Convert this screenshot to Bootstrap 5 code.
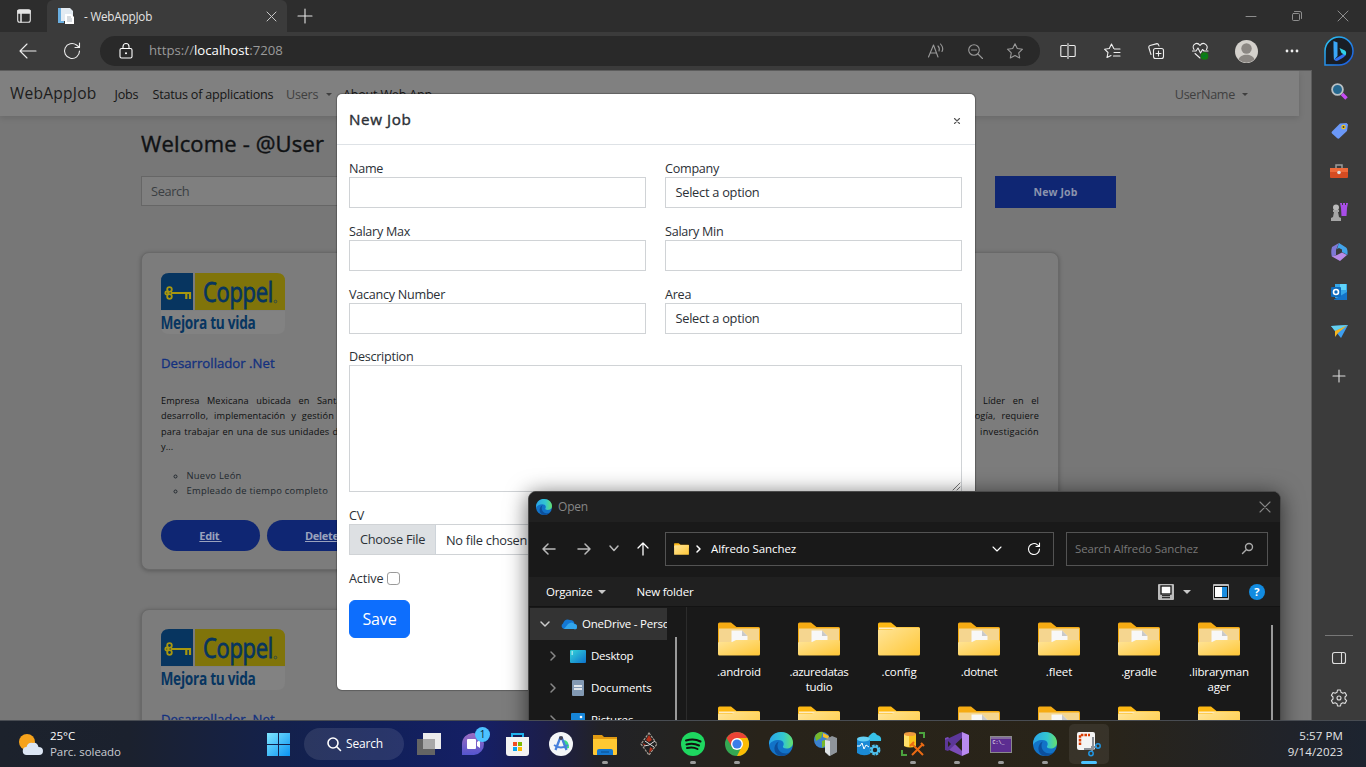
<!DOCTYPE html>
<html lang="en">
<head>
<meta charset="utf-8">
<title>WebAppJob</title>
<link href="https://cdn.jsdelivr.net/npm/bootstrap@5.3.0/dist/css/bootstrap.min.css" rel="stylesheet">
<style>
body{width:1366px;height:767px;overflow:hidden;margin:0;background:#3b3b3b;font-family:"Open Sans","Noto Sans",sans-serif;font-size:12.8px;letter-spacing:-.37px;line-height:1.2;white-space:nowrap}
svg{display:block;flex:none;overflow:visible}
.ln{fill:none;stroke:currentColor;stroke-width:1.1;stroke-linecap:round;stroke-linejoin:round}
/* browser frame */
.tabstrip{height:32px;background:#2d2d2d;color:#e4e4e4}
.tabact{width:47px;height:32px}
.tab-page{width:240px;height:32px;background:#3b3b3b;border-radius:6px 6px 0 0;font-size:11.7px;letter-spacing:-.2px;padding:0 11px 0 11px}
.tab-page .ln{color:#c8c8c8;stroke-width:1}
.winbtn{width:46px;color:#999}
.winbtn .ln{stroke-width:.9}
.toolbar{height:38px;color:#eee}
.omnibox{width:940px;height:30px;border-radius:15px;background:#292929;color:#9a9a9a;margin-left:12px;padding:0 17px 0 20px;font-size:13.2px;letter-spacing:0}
.tslot{width:44px}
.stage{height:650px;overflow:hidden}
.page{width:1312px;height:650px;background:#777;border-right:1px solid #5c5c5c;border-top:1px solid #5d5d5d;overflow:hidden}
.edgebar{width:54px;background:#3b3b3b;color:#ddd;padding-top:1px}
.edgebar .slot{height:40.2px}
/* site */
.topnav{width:1299px;height:45px;background:#808080;box-shadow:0 2px 6px rgba(0,0,0,.12);color:#161616;padding:2px 0 0 10px;font-size:12.6px;letter-spacing:-.22px}
.brandname{font-size:15.6px;width:104.500px;letter-spacing:.2px;color:#1c1c1c;margin-top:-2px}
.caret{width:0;height:0;border:3.5px solid transparent;border-top-color:currentColor;border-bottom:0;margin-left:8px}
.mute{color:#3f3f3f}
.body-col{width:918px;margin-left:141px}
.hello{font-size:22px;font-weight:400;line-height:26px;color:#101214;margin:14px 0 20px;letter-spacing:.15px;-webkit-text-stroke:.4px #101214}
.searchbox{width:700px;height:30px;border:1px solid #666;background:#7f7f7f;color:#3a3e42;padding:1px 9px 0}
.btn-newjob{width:121px;height:32px;background:#0f2673;color:#8b93ad;font-size:10.5px;font-weight:700;letter-spacing:.1px}
.jobcard{height:318px;width:918px;border:1px solid #696969;border-radius:8px;background:#7c7c7c;box-shadow:0 1px 4px rgba(0,0,0,.25);padding:20px 19px;margin-bottom:39px}
.jobtitle{color:#12307f;font-size:13.2px;font-weight:400;margin:20px 0 21px;line-height:18px;letter-spacing:0;-webkit-text-stroke:.3px #12307f}
.jobtext{font-size:9.2px;line-height:15.4px;color:#0d0f10;letter-spacing:.12px}
.jobtext .w1{word-spacing:5px}.jobtext .w2{word-spacing:3.4px}.jobtext .w3{word-spacing:.7px}
.jobmeta{font-size:9.4px;line-height:15.4px;color:#22292f;letter-spacing:.27px;list-style:circle;margin:13px 0 0;padding-left:25.5px}
.btn-pill{height:31px;border-radius:16px;background:#0f2673;color:#9aa2bd;font-weight:700;font-size:11px;text-decoration:underline;margin-right:7px}
/* form dialog */
.jobmodal{left:337px;top:24px;width:638px;height:596px;background:#fff;border-radius:5px;box-shadow:0 0 1px 1px rgba(0,0,0,.25);color:#2b3036}
.jm-head{height:51px;border-bottom:1px solid #dee2e6;padding:0 15px 0 12px}
.jm-title{font-size:15.2px;font-weight:400;letter-spacing:.6px;-webkit-text-stroke:.4px #2b3036}
.jm-body{padding:15px 13px 0 12px}
.fgrid{display:grid;grid-template-columns:297px 297px;column-gap:19px}
.lab{font-size:12.6px;line-height:17px;height:17px;letter-spacing:-.26px}
.inp{height:31px;border:1px solid #d0d3d6;border-radius:0;padding:1px 9.5px 0;background:#fff;display:flex;align-items:center;margin-bottom:14.8px;letter-spacing:-.27px}
.chooser{background:#dde0e3;height:29px;margin:-1px 0 0 -9.5px;width:86px;border-right:1px solid #ced4da}
.btn-save{width:61px;height:38px;font-size:16px;letter-spacing:-.1px;padding:0;border-radius:6px}
.chk{width:13px;height:13px;border-radius:3px;border-color:#999}
/* file dialog */
.filedlg{left:528px;top:421px;width:753px;height:300px;background:#191919;border:1px solid #4a4a4a;border-radius:8px;box-shadow:0 3px 22px rgba(0,0,0,.6);overflow:hidden;color:#fff;font-size:11.5px;letter-spacing:-.3px}
.fd-title{height:30px;background:#202020;color:#868686;padding:0 10px 0 7px;font-size:12px;letter-spacing:-.2px}
.fd-nav{height:55px;color:#b9b9b9;padding-bottom:2px}
.fd-box{height:34px;border:1px solid #535353}
.fd-tools{height:30px;background:#202020;border-bottom:1px solid #131313;padding:0 15px 0 17px;letter-spacing:-.2px}
.tree{width:137px;overflow:hidden;margin-left:1px}
.tree .trow{height:32px}
.fcell{width:80px;height:84px;text-align:center;line-height:15px;padding-top:15px}
.fcell svg{margin:0 auto 8px}
.flist{width:562px}
.bar-v{width:2px;background:#9a9a9a}
/* taskbar */
.taskbar{height:47px;border-top:1px solid #484c52;color:#fff;background:linear-gradient(90deg,#1c222c 0,#1b212e 130px,#14214a 270px,#112059 380px,#151f66 480px,#1c1e4a 545px,#222227 600px,#232323 650px,#28231a 760px,#292419 1100px,#20232a 1290px,#1d2430 100%)}
.pill{width:100px;height:32px;border-radius:16px;background:rgba(255,255,255,.1);font-size:12px;letter-spacing:-.2px;padding-top:1px}
.tk{width:44px;height:46px}
.run::after{content:"";position:absolute;bottom:3px;left:19px;width:6px;height:3px;border-radius:2px;background:#9b9b9b}
.active-app{background:rgba(255,255,255,.07);border-radius:5px;width:40px;height:40px;margin:3px 2px}
.active-app::after{bottom:0;left:12px;width:16px;background:#4cc2ff}
.notif{left:24px;top:6px;width:15px;height:15px;border-radius:50%;background:#4cc2ff;color:#123;font-size:10px;line-height:15px;text-align:center}
.clock{font-size:11.5px;line-height:16px;letter-spacing:-.05px}
</style>
</head>
<body class="d-flex flex-column">
<svg width="0" height="0" class="position-absolute">
<defs>
<linearGradient id="gF" x1="0" y1="0" x2="1" y2="1"><stop offset="0" stop-color="#ffe59a"/><stop offset="1" stop-color="#ffc736"/></linearGradient>
<linearGradient id="gE2" x1="0" y1="0" x2="1" y2="0"><stop offset="0" stop-color="#2aa5e8"/><stop offset=".6" stop-color="#33c7cf"/><stop offset="1" stop-color="#66e06a"/></linearGradient>
<linearGradient id="gW" x1="0" y1="0" x2="1" y2="1"><stop offset="0" stop-color="#7fe6ff"/><stop offset="1" stop-color="#0a93f2"/></linearGradient>
<linearGradient id="gB" x1="0" y1="0" x2="1" y2="1"><stop offset="0" stop-color="#2bc8f5"/><stop offset="1" stop-color="#1c55dd"/></linearGradient>
<linearGradient id="gP" x1="0" y1="0" x2="0" y2="1"><stop offset="0" stop-color="#9c6cc0"/><stop offset="1" stop-color="#5455cf"/></linearGradient>
<linearGradient id="gD" x1="0" y1="0" x2="1" y2="1"><stop offset="0" stop-color="#35d4da"/><stop offset="1" stop-color="#0d72cb"/></linearGradient>
</defs>
<symbol id="fold" viewBox="0 0 42 34"><path d="M0 2Q0 .5 1.500 .5H13L18.500 5H40.500Q42 5 42 6.500V14H0z" fill="#fdb813"/><path d="M1 5.500H12L18 5.500V7H1z" fill="#fff" opacity=".75"/><path d="M0 8.500Q0 7.500 1.500 7.500H14L18 5.500H40.500Q42 5.500 42 7V32Q42 33.500 40.500 33.500H1.500Q0 33.500 0 32z" fill="url(#gF)"/></symbol>
<symbol id="foldp" viewBox="0 0 42 34"><path d="M0 2Q0 .5 1.500 .5H13L18.500 5H40.500Q42 5 42 6.500V32H0z" fill="#f5ab13"/><path d="M1 6.500H41V22H1z" fill="#f5d690"/><path d="M13.500 8.500H24L29.500 14V24H13.500z" fill="#f8f8f8"/><path d="M24 8.500V14H29.500z" fill="#c9c9c9"/><path d="M0 21Q0 20 1.500 20H14L18 18H40.500Q42 18 42 19.500V32Q42 33.500 40.500 33.500H1.500Q0 33.500 0 32z" fill="url(#gF)"/></symbol>
<symbol id="edge" viewBox="0 0 24 24"><circle cx="12" cy="12" r="12" fill="#1273c8"/><path d="M.1 10.500C1 4 6 0 12 0 19 0 24 5 24 10.500 24 14.500 21 16.500 17.500 16.500 14.500 16.500 13.500 15.200 14 14.200 15.500 12.500 15 8 9.500 8 5 8 1.500 10 .1 13z" fill="url(#gE2)"/><path d="M8.500 13.500C8.500 18 12 21.500 17 21.500 19 21.500 21.500 20 22.500 18.500 20 22.500 16 24.200 12 24 7 23.500 5 19 5.500 15.500 6 12 8 10 10 9.500 9 10.500 8.500 12 8.500 13.500z" fill="#0c4f9c"/></symbol>
<symbol id="logobase" viewBox="0 0 124 61"><path d="M0 8Q0 0 8 0H32V37H0z" fill="#073560"/><path d="M34 0H116Q124 0 124 8V37H34z" fill="#80740a"/><path d="M0 37.500H124V53Q124 61 116 61H8Q0 61 0 53z" fill="#828282"/><g fill="none" stroke="#a8970f" stroke-width="1.800"><circle cx="8.500" cy="16.500" r="2.300"/><circle cx="8.500" cy="23.500" r="2.300"/><circle cx="5.800" cy="20" r="1.500"/><path d="M10 20H29V26M25.300 20V26" stroke-width="2.200"/></g><circle cx="114.500" cy="28.500" r="1.300" fill="none" stroke="#073560" stroke-width=".6"/></symbol>
</svg>

<header class="tabstrip d-flex align-items-center">
  <div class="tabact d-flex align-items-center justify-content-center"><svg width="14" height="14" class="ln"><rect x=".7" y=".7" width="12.600" height="12.600" rx="2"/><path d="M1 2.500H13V1.500H1zM4 4V13M1 4H13" stroke-width="1.500"/></svg></div>
  <div class="tab-page d-flex align-items-center"><svg width="16" height="16"><path d="M0 0H6V15H0z" fill="#69aee0"/><path d="M3 0H12L15 3V13H3z" fill="#e3ebf2"/><path d="M7 6H13L16 9V16H7z" fill="#fff"/><path d="M9 9h4M9 11h5M9 13h5" stroke="#aeb7c0"/></svg><span style="margin-left:10px">- WebAppJob</span><svg width="9" height="9" class="ln ms-auto"><path d="M0 0 9 9M9 0 0 9"/></svg></div>
  <svg width="14" height="14" class="ln" style="margin-left:11px"><path d="M7 0V14M0 7H14"/></svg>
  <div class="ms-auto d-flex">
    <div class="winbtn d-flex justify-content-center"><svg width="10" height="10" class="ln"><path d="M0 5.500H10"/></svg></div>
    <div class="winbtn d-flex justify-content-center"><svg width="10" height="10" class="ln"><rect x=".5" y="2.500" width="7" height="7" rx="1"/><path d="M2.500 .5H8Q9.500 .5 9.500 2V7.500"/></svg></div>
    <div class="winbtn d-flex justify-content-center"><svg width="10" height="10" class="ln"><path d="M0 0 10 10M10 0 0 10"/></svg></div>
  </div>
</header>

<div class="toolbar d-flex align-items-center">
  <div class="tslot d-flex justify-content-center" style="width:56px"><svg width="16" height="14" class="ln"><path d="M16 7H0M7 0 0 7 7 14"/></svg></div>
  <div class="tslot d-flex justify-content-center" style="width:32px"><svg width="16" height="16" class="ln"><path d="M15.500 8A7.500 7.500 0 1 1 12.500 2L15 4M15.500 0V4.500H11"/></svg></div>
  <div class="omnibox d-flex align-items-center"><svg width="14" height="16" class="ln text-white"><rect x="0" y="5.500" width="12" height="9.500" rx="1.500"/><path d="M3 5.500V3.500A3 3 0 0 1 9 3.500V5.500"/><circle cx="6" cy="10.300" r=".5"/></svg><span style="margin-left:15px">https://<span class="text-white">localhost</span>:7208</span>
    <div class="ms-auto d-flex align-items-center" style="gap:24px">
      <svg width="16" height="14" class="ln"><path d="M.5 13 5.500 1 10 13M2.300 9H8.500M10 2Q12 4 11 7M12.500 0Q16 4 14 7.500"/></svg>
      <svg width="15" height="15" class="ln"><circle cx="6" cy="6" r="5.300"/><path d="M3.500 6H8.500M10 10 14.500 14.500"/></svg>
      <svg width="16" height="16" class="ln"><path d="M8 .8 10.300 5.500 15.500 6.200 11.700 9.900 12.700 15 8 12.500 3.300 15 4.300 9.900 .5 6.200 5.700 5.500z"/></svg>
    </div></div>
  <div class="d-flex align-items-center" style="margin-left:6px">
    <div class="tslot d-flex justify-content-center"><svg width="16" height="16" class="ln"><path d="M6.500 2.500H1.800Q.8 2.500 .8 3.500V12.500Q.8 13.500 1.800 13.500H6.500M9.500 2.500H14.200Q15.200 2.500 15.200 3.500V12.500Q15.200 13.500 14.200 13.500H9.500M8 .5V15.500"/></svg></div>
    <div class="tslot d-flex justify-content-center"><svg width="16" height="16" class="ln"><path d="M9.800 5.500 7.500 1 5.300 5.500 .5 6.200 4 9.500 3 14.500 7 12.500M10.500 6H16M10 9.500H16M9.500 13H16"/></svg></div>
    <div class="tslot d-flex justify-content-center"><svg width="16" height="16" class="ln"><rect x="5.500" y="5.500" width="10" height="10" rx="2"/><path d="M10.500 8V13M8 10.500H13M3 11.500 .8 4.500Q.5 3 2 2.500L9 .6Q10.500 .5 11 3"/></svg></div>
    <div class="tslot d-flex justify-content-center"><svg width="17" height="16" class="ln"><path d="M2 6.500C-1 2 5-2 8 2.500 11-2 17 2 14.500 6.500M.5 8H4L6 5 8.500 10 10.500 6.500 12 8H16M3 10.500 8 15"/><circle cx="12.500" cy="13" r="3.300" fill="#107c10" stroke="#107c10"/><path d="m11 13 1 1 2-2" stroke="#073"/></svg></div>
    <div class="tslot d-flex justify-content-center" style="width:48px"><svg width="23" height="23"><circle cx="11.500" cy="11.500" r="11.500" fill="#d4d1cc"/><circle cx="11.500" cy="8.500" r="5.200" fill="#8b8783"/><path d="M3.500 19.500C5 13 18 13 19.500 19.500Q11.500 26 3.500 19.500z" fill="#8b8783"/></svg></div>
    <div class="tslot d-flex justify-content-center"><svg width="14" height="4" fill="#eee"><circle cx="2" cy="2" r="1.400"/><circle cx="7" cy="2" r="1.400"/><circle cx="12" cy="2" r="1.400"/></svg></div>
    <svg width="30" height="30" style="margin-left:10px"><path d="M1 29V15A14 14 0 1 1 15 29z" fill="#191e26" stroke="url(#gB)" stroke-width="1.500"/><path d="M9.500 5 13.500 6.500V20L10 24Q9.500 21 9.500 5z" fill="#3aa6f8"/><path d="M10 23.500 20 17.500 21.500 19Q21 21 15 24 11.500 26 10 23.500z" fill="#3170ef"/><path d="M15.500 12 21 14.500Q23 16.500 21.500 19.500L17.500 17z" fill="#31d4e8"/></svg>
  </div>
</div>

<main class="stage d-flex position-relative">
  <div class="page">
    <nav class="topnav d-flex align-items-center">
      <span class="brandname">WebAppJob</span>
      <span style="width:38px">Jobs</span><span style="width:133.500px">Status of applications</span>
      <span class="mute d-flex align-items-center" style="width:57px">Users<i class="caret"></i></span><span>About Web App</span>
      <span class="mute d-flex align-items-center ms-auto" style="margin-right:51px;letter-spacing:-.3px">UserName<i class="caret" style="margin-left:7px"></i></span>
    </nav>
    <div class="body-col">
      <h1 class="hello">Welcome - @User</h1>
      <div class="d-flex" style="width:975px;height:76px"><div class="searchbox d-flex align-items-center">Search</div><div class="btn-newjob ms-auto d-flex align-items-center justify-content-center">New Job</div></div>
      <section class="jobcard">
        <svg width="124" height="61"><use href="#logobase"/><text x="42" y="29" font-size="28" fill="#073560" stroke="#073560" stroke-width=".8" textLength="70" lengthAdjust="spacingAndGlyphs">Coppel</text><text x="-.5" y="56" font-weight="700" font-size="18" fill="#073560" textLength="95" lengthAdjust="spacingAndGlyphs">Mejora tu vida</text></svg>
        <h2 class="jobtitle">Desarrollador .Net</h2>
        <div class="jobtext">
          <div class="d-flex justify-content-between w1"><span>Empresa Mexicana ubicada en Santa Catarina</span><span>Monterrey; Líder en el</span></div>
          <div class="d-flex justify-content-between w2"><span>desarrollo, implementación y gestión de</span><span>tecnología, requiere</span></div>
          <div class="d-flex justify-content-between w3"><span>para trabajar en una de sus unidades de negocio</span><span style="letter-spacing:.25px">investigación</span></div>
          <div>y...</div>
        </div>
        <ul class="jobmeta"><li>Nuevo León</li><li>Empleado de tiempo completo</li></ul>
        <div class="d-flex" style="margin-top:22px"><a class="btn-pill d-flex align-items-center justify-content-center" style="width:99px">Edit&nbsp;</a><a class="btn-pill d-flex align-items-center justify-content-center" style="width:112px">Delete&nbsp;</a></div>
      </section>
      <section class="jobcard" style="padding-top:19px">
        <svg width="124" height="61"><use href="#logobase"/><text x="42" y="29" font-size="28" fill="#073560" stroke="#073560" stroke-width=".8" textLength="70" lengthAdjust="spacingAndGlyphs">Coppel</text><text x="-.5" y="56" font-weight="700" font-size="18" fill="#073560" textLength="95" lengthAdjust="spacingAndGlyphs">Mejora tu vida</text></svg>
        <h2 class="jobtitle">Desarrollador .Net</h2>
      </section>
    </div>
  </div>
  <aside class="edgebar d-flex flex-column align-items-center">
    <div class="slot d-flex align-items-center"><svg width="17" height="17"><path d="M11 11 15.500 15.500" stroke="#c64bf5" stroke-width="3.500"/><circle cx="6.500" cy="6.500" r="5.400" fill="#25688f" stroke="#b9c0c4" stroke-width="1.800"/></svg></div>
    <div class="slot d-flex align-items-center"><svg width="17" height="16"><path d="M9 .5 15.500 0 17 1.500 16 8 8 15.500Q7 16 6 15L1 10.500Q0 9.500 1 8.500z" fill="#6b98f7"/><circle cx="12.500" cy="4" r="1.600" fill="#334" stroke="#f5c518" stroke-width="1.200"/></svg></div>
    <div class="slot d-flex align-items-center"><svg width="18" height="14"><path d="M6 4V1H12V4" fill="none" stroke="#9c9c9c" stroke-width="1.500"/><rect y="4" width="18" height="10" rx="1" fill="#d54c22"/><path d="M0 4H18V8H0z" fill="#ef6a3a"/><circle cx="9" cy="8.500" r="1.800" fill="#ddd"/></svg></div>
    <div class="slot d-flex align-items-center"><svg width="18" height="18"><path d="M10 0H12V2H13V0H15V2H16V0H18L17 5 16.500 13H11.500L11 5z" fill="#a94ee8"/><circle cx="6" cy="4.500" r="3" fill="#bbb"/><path d="M3 7H9V9H8L9 14 11 15V18H1V15L3 14 4 9H3z" fill="#a6a6a6"/></svg></div>
    <div class="slot d-flex align-items-center"><svg width="17" height="18"><path d="M8 0 5 7V12L1 14Q-.5 9 1 4z" fill="#7f78d6"/><path d="M8 0 15 4.500Q17 6 16.500 12L11 9V6.500L8 5 6 6z" fill="#42a4ea"/><path d="M1 13.500 6 12 11 9.500 16 12 9 18z" fill="#b88be8"/></svg></div>
    <div class="slot d-flex align-items-center"><svg width="16" height="16"><path d="M4 0H16V14H4z" fill="#35a7e8"/><path d="M9 0H15V6H9z" fill="#5fd3fa"/><path d="M3 15.500 16 8V16H3z" fill="#1473c8"/><rect y="3" width="10" height="10" rx="1" fill="#0f6cbd"/><circle cx="5" cy="8" r="2.500" fill="none" stroke="#fff" stroke-width="1.600"/></svg></div>
    <div class="slot d-flex align-items-center"><svg width="17" height="14"><path d="M0 1 17 0 10 13z" fill="#3d9ef0"/><path d="M0 1 17 0 4 6z" fill="#64d0ee"/><path d="M4 6 16 .5 7 8 4 12z" fill="#f6b51e"/></svg></div>
    <div class="slot d-flex align-items-center" style="height:47px"><svg width="12" height="12" class="ln"><path d="M6 0V12M0 6H12"/></svg></div>
    <div class="mt-auto" style="width:28px;border-top:1px solid #777;height:3px"></div>
    <div class="slot d-flex align-items-center"><svg width="14" height="12" class="ln"><rect x=".5" y=".5" width="13" height="11" rx="2"/><path d="M9.500 .5V11.500"/></svg></div>
    <div class="slot d-flex align-items-start" style="height:42px;padding-top:11px"><svg width="18" height="18" class="ln" viewBox="0 0 18 18"><path d="M7.500 1H10.500L11 3.300 12.800 4.300 15 3.600 16.600 6.300 15 8V10L16.600 11.700 15 14.400 12.800 13.700 11 14.700 10.500 17H7.500L7 14.700 5.200 13.700 3 14.400 1.400 11.700 3 10V8L1.400 6.300 3 3.600 5.200 4.300 7 3.300z"/><circle cx="9" cy="9" r="2"/></svg></div>
  </aside>

  <div class="jobmodal position-absolute">
    <div class="jm-head d-flex align-items-center justify-content-between"><span class="jm-title">New Job</span><svg width="6" height="6" class="ln" style="margin-top:3px;color:#555"><path d="M.5 .5 5.500 5.500M5.500 .5 .5 5.500"/></svg></div>
    <div class="jm-body">
      <div class="fgrid">
        <div><div class="lab">Name</div><div class="inp"></div></div><div><div class="lab">Company</div><div class="inp">Select a option</div></div>
        <div><div class="lab">Salary Max</div><div class="inp"></div></div><div><div class="lab">Salary Min</div><div class="inp"></div></div>
        <div><div class="lab">Vacancy Number</div><div class="inp"></div></div><div><div class="lab">Area</div><div class="inp">Select a option</div></div>
      </div>
      <div class="lab">Description</div>
      <div class="inp align-items-end justify-content-end" style="height:127px;padding:1px"><svg width="7" height="7" class="ln" style="color:#666;stroke-width:.9"><path d="M0 7 7 0M4 7 7 4"/></svg></div>
      <div class="lab">CV</div>
      <div class="inp"><span class="chooser d-flex align-items-center justify-content-center">Choose File</span><span style="margin-left:10px">No file chosen</span></div>
      <div class="d-flex align-items-center lab" style="letter-spacing:-.1px">Active<input type="checkbox" class="form-check-input m-0 chk" style="margin-left:4px!important"></div>
      <button class="btn btn-primary btn-save" style="margin-top:13px">Save</button>
    </div>
  </div>

  <div class="filedlg position-absolute">
    <div class="fd-title d-flex align-items-center"><svg width="16" height="16"><use href="#edge"/></svg><span style="margin-left:6px">Open</span><svg width="10" height="10" class="ln ms-auto"><path d="M0 0 10 10M10 0 0 10"/></svg></div>
    <div class="fd-nav d-flex align-items-center">
      <svg width="12" height="10" class="ln" style="margin-left:14px;stroke-width:1.500"><path d="M12 5H0M5 0 0 5 5 10"/></svg>
      <svg width="12" height="10" class="ln" style="margin-left:23px;stroke-width:1.500"><path d="M0 5H12M7 0 12 5 7 10"/></svg>
      <svg width="8" height="5" class="ln" style="margin-left:20px;stroke-width:1.500"><path d="M0 0 4 4.500 8 0"/></svg>
      <svg width="10" height="12" class="ln text-white" style="margin-left:20px;stroke-width:1.300"><path d="M5 12V0M0 5 5 0 10 5"/></svg>
      <div class="fd-box d-flex align-items-center text-white" style="width:389px;margin-left:17px;padding:0 13px 0 8px"><svg width="15" height="12"><use href="#fold"/></svg><svg width="4" height="6" class="ln" style="margin:0 10px 0 8px;stroke-width:1.500"><path d="M0 0 3 3 0 6"/></svg><span style="letter-spacing:-.08px">Alfredo Sanchez</span>
        <svg width="8" height="4" class="ln ms-auto"><path d="M0 0 4 4 8 0"/></svg><svg width="12" height="12" class="ln" style="margin-left:27px"><path d="M11.500 6A5.500 5.500 0 1 1 9.500 1.800L11 3M11.500 0V3.500H8"/></svg></div>
      <div class="fd-box d-flex align-items-center justify-content-between" style="width:202px;margin-left:12px;padding:0 14px 0 8px;color:#777;letter-spacing:-.12px">Search Alfredo Sanchez<svg width="11" height="11" class="ln" style="color:#aaa;stroke-width:1.400"><circle cx="7" cy="4" r="3.500"/><path d="M4.500 6.500 .5 10.500"/></svg></div>
    </div>
    <div class="fd-tools d-flex align-items-center">Organize<i class="caret" style="border-width:4.500px 4px 0;margin-left:6px;color:#c8c8c8"></i><span style="margin-left:30px">New folder</span>
      <svg class="ms-auto" width="16" height="16"><rect width="16" height="16" rx="1" fill="#bbb"/><rect x="3" y="2" width="10" height="8" fill="#fff" stroke="#111" stroke-width="1.300"/><path d="M4 11.700H12M4 13.700H12" stroke="#111"/></svg><i class="caret" style="border-width:4.500px 4px 0;margin-left:9px;color:#c8c8c8"></i>
      <svg style="margin-left:22px" width="16" height="16"><rect width="16" height="16" rx="1" fill="#bbb"/><rect x="1.500" y="2.500" width="13" height="11" fill="#fff" stroke="#111"/><path d="M9 3H14V13H9z" fill="#1b8ddf"/></svg>
      <svg style="margin-left:20px" width="16" height="16"><circle cx="8" cy="8" r="8" fill="#128be0"/><text x="5.300" y="12" font-size="11" font-weight="700" fill="#fff">?</text></svg></div>
    <div class="d-flex" style="height:184px">
      <div class="tree" style="margin-top:1px">
        <div class="trow d-flex align-items-center" style="background:#333;padding-left:11px"><svg width="8" height="5" class="ln" style="stroke-width:1.500;color:#ccc"><path d="M0 0 4 4 8 0"/></svg><svg width="16" height="10" style="margin:0 5px 0 12px"><path d="M3 10A3 3 0 0 1 2 4.500Q4-1 9 1 13 1 13.500 5 16 5 16 8T13 10z" fill="#1478d4"/><path d="M3 10 7 5Q11 2 13.500 5 16 5 16 8T13 10z" fill="#32a5ec"/></svg><span style="letter-spacing:-.2px">OneDrive - Personal</span></div>
        <div class="trow d-flex align-items-center" style="padding-left:21px"><svg width="5" height="8" class="ln" style="color:#888;stroke-width:1.500"><path d="M0 0 4 4 0 8"/></svg><svg width="16" height="13" style="margin:0 5px 0 14px"><rect width="16" height="13" rx="1" fill="url(#gD)"/><path d="M1.500 2H3M1.500 4H3" stroke="#fff"/></svg>Desktop</div>
        <div class="trow d-flex align-items-center" style="padding-left:21px"><svg width="5" height="8" class="ln" style="color:#888;stroke-width:1.500"><path d="M0 0 4 4 0 8"/></svg><svg width="12" height="16" style="margin:0 7px 0 16px"><rect width="12" height="16" rx="1" fill="#8299b3"/><path d="M2 6H10M2 9H10" stroke="#fff" stroke-width="1.500"/></svg><span style="letter-spacing:-.1px">Documents</span></div>
        <div class="trow d-flex align-items-center" style="padding-left:21px"><svg width="5" height="8" class="ln" style="color:#888;stroke-width:1.500"><path d="M0 0 4 4 0 8"/></svg><svg width="14" height="14" style="margin:0 6px 0 15px"><rect width="14" height="14" rx="1" fill="#1685d8"/><circle cx="10" cy="4" r="1.300" fill="#fff"/><path d="M1 14 6 8 12 14z" fill="#8fd2fa"/></svg><span style="letter-spacing:-.1px">Pictures</span></div>
      </div>
      <div class="bar-v" style="margin:30px 0 0 8px"></div><div style="width:1px;background:#2c2c2c;margin-left:9px"></div>
      <div class="flist d-flex flex-wrap align-content-start" style="margin-left:12px">
        <div class="fcell" style="letter-spacing:-.15px"><svg width="42" height="34"><use href="#foldp"/></svg>.android</div>
        <div class="fcell"><svg width="42" height="34"><use href="#foldp"/></svg>.azuredatas<br>tudio</div>
        <div class="fcell" style="letter-spacing:-.05px"><svg width="42" height="34"><use href="#fold"/></svg>.config</div>
        <div class="fcell"><svg width="42" height="34"><use href="#foldp"/></svg>.dotnet</div>
        <div class="fcell" style="letter-spacing:-.05px"><svg width="42" height="34"><use href="#foldp"/></svg>.fleet</div>
        <div class="fcell" style="letter-spacing:-.15px"><svg width="42" height="34"><use href="#foldp"/></svg>.gradle</div>
        <div class="fcell" style="letter-spacing:-.15px"><svg width="42" height="34"><use href="#foldp"/></svg>.libraryman<br>ager</div>
        <div class="fcell"><svg width="42" height="34"><use href="#fold"/></svg></div>
        <div class="fcell"><svg width="42" height="34"><use href="#fold"/></svg></div>
        <div class="fcell"><svg width="42" height="34"><use href="#fold"/></svg></div>
        <div class="fcell"><svg width="42" height="34"><use href="#foldp"/></svg></div>
        <div class="fcell"><svg width="42" height="34"><use href="#foldp"/></svg></div>
        <div class="fcell"><svg width="42" height="34"><use href="#fold"/></svg></div>
        <div class="fcell"><svg width="42" height="34"><use href="#fold"/></svg></div>
      </div>
      <div class="bar-v" style="margin:18px 0 0 10px"></div>
    </div>
  </div>
</main>

<footer class="taskbar d-flex align-items-center">
  <div class="d-flex align-items-center" style="width:267px;padding-left:19px"><svg width="24" height="23"><circle cx="8" cy="9" r="8" fill="#f6a31c"/><path d="M8 22A4 4 0 0 1 7.500 14Q9 9 14 10 18 9 19.500 14 24 14 24 18T20 22z" fill="#dce6f4"/></svg><div class="clock" style="margin-left:7px">25°C<br><span style="color:#c9ccd2">Parc. soleado</span></div></div>
  <svg width="23" height="23"><path d="M0 0H11V11H0zM12 0H23V11H12zM0 12H11V23H0zM12 12H23V23H12z" fill="url(#gW)"/></svg>
  <div class="pill d-flex align-items-center justify-content-center" style="margin:0 3px 0 14px"><svg width="14" height="14" class="ln" style="stroke-width:1.600;margin:-2px 5px 0 2px"><circle cx="6" cy="6" r="5"/><path d="M9.800 9.800 13.500 13.500"/></svg>Search</div>
  <div class="tk d-flex align-items-center justify-content-center"><svg width="24" height="22"><path d="M6 0H24V16H6z" fill="#ececec"/><path d="M0 6H18V22H0z" fill="#646464"/><path d="M6 6H18V16H6z" fill="#a8a8a8"/></svg></div>
  <div class="tk d-flex align-items-center justify-content-center position-relative"><svg width="23" height="22"><path d="M0 22V11A11 11 0 1 1 12 22z" fill="url(#gP)"/><rect x="5" y="6" width="9" height="10" rx="1" fill="#fff"/><path d="M15 9 18 7V15L15 13z" fill="#fff"/></svg><span class="notif position-absolute">1</span></div>
  <div class="tk d-flex align-items-center justify-content-center"><svg width="23" height="23"><path d="M6 5V1H17V5" fill="none" stroke="#20b3ee" stroke-width="2"/><path d="M0 4H23V20Q23 23 20 23H3Q0 23 0 20z" fill="#f3f3f3"/><path d="M7 9H11V13H7z" fill="#f04e23"/><path d="M12 9H16V13H12z" fill="#7db900"/><path d="M7 14H11V18H7z" fill="#09a4ee"/><path d="M12 14H16V18H12z" fill="#fdb900"/></svg></div>
  <div class="tk d-flex align-items-center justify-content-center"><svg width="24" height="24"><circle cx="12" cy="12" r="12" fill="#f4f6f8"/><path d="M13 8Q20 7 20 16L16 17z" fill="#3ddc84"/><path d="M11.500 5 6.500 18M12.500 5 17.500 18" fill="none" stroke="#4780dc" stroke-width="2.300"/><path d="M5 13Q12 18 19 13" fill="none" stroke="#4780dc" stroke-width="1.800"/><circle cx="12" cy="6" r="2" fill="#445"/></svg></div>
  <div class="tk run d-flex align-items-center justify-content-center position-relative"><svg width="24" height="21"><path d="M0 1H9L11 3H24V20H0z" fill="#e19a12"/><path d="M0 5H24V20Q24 21 23 21H1Q0 21 0 20z" fill="#ffc832"/><path d="M4 21V17Q4 15 6 15H18Q20 15 20 17V21z" fill="#1478d0"/><path d="M8 18H16" stroke="#0b4d8c"/></svg></div>
  <div class="tk d-flex align-items-center justify-content-center"><svg width="16" height="22"><path d="M8 0 16 11 8 22 0 11z" fill="#222" stroke="#a89f96" stroke-width="1.200" stroke-dasharray="2.500 1"/><path d="M8 2 11 7 8 9 5 7zM9 14 12 16 8 20zM2 10 5 12 3 13z" fill="#b5301b"/><path d="M3 13 8 12 14 8M4 8 13 14" stroke="#ddd"/></svg></div>
  <div class="tk run d-flex align-items-center justify-content-center position-relative"><svg width="24" height="24"><circle cx="12" cy="12" r="12" fill="#1ed760"/><path d="M5 8.500Q13 6 19.500 9.500M5.500 12.500Q12 10.500 18 13.500M6 16Q12 14.500 16.500 17" fill="none" stroke="#111" stroke-width="2" stroke-linecap="round"/></svg></div>
  <div class="tk run d-flex align-items-center justify-content-center position-relative"><svg width="24" height="24"><circle cx="12" cy="12" r="12" fill="#34a853"/><path d="M22.400 6A12 12 0 0 1 12 24L17 14 12 6z" fill="#fbbc05"/><path d="M1.600 6 7 15 12 12 12 6H22.400A12 12 0 0 0 1.600 6z" fill="#ea4335"/><circle cx="12" cy="12" r="6" fill="#fff"/><circle cx="12" cy="12" r="4.600" fill="#3b7de9"/></svg></div>
  <div class="tk d-flex align-items-center justify-content-center"><svg width="24" height="24"><use href="#edge"/></svg></div>
  <div class="tk d-flex align-items-center justify-content-center"><svg width="23" height="24"><circle cx="8" cy="8" r="8" fill="#3b82d0"/><path d="M1 4Q5-1 9 0L7 6 2 9zM8 9 13 7 12 13 8 16z" fill="#76b82a"/><path d="M9 1 15 4 14 7 9 5z" fill="#f6c02a"/><path d="M11 8 18 4 23 6V20L15 24 11 20z" fill="#8f959b"/><path d="M16 9 23 6V20L16 24z" fill="#8f959b"/><path d="M16 9V24L11 20V8z" fill="#dfe3e5"/></svg></div>
  <div class="tk d-flex align-items-center justify-content-center"><svg width="25" height="24"><path d="M12 9A4 4 0 0 1 13 3Q17-2 20 3 25 4 24 9z" fill="#37c1e8"/><path d="M0 7V21Q6 25 13 22V7z" fill="#1a8ad6"/><ellipse cx="6.500" cy="7" rx="6.500" ry="2.500" fill="#64d0f5"/><path d="M0 14H3L5 11 7 17 9 13 12 15" fill="none" stroke="#fff"/><circle cx="18" cy="18" r="4.200" fill="#222" stroke="#4fc3f0" stroke-width="2.500" stroke-dasharray="2.500 .8"/><circle cx="18" cy="18" r="3" fill="none" stroke="#4fc3f0" stroke-width="1.500"/></svg></div>
  <div class="tk run d-flex align-items-center justify-content-center position-relative"><svg width="24" height="24"><path d="M3 2V14Q9 17 15 14V2z" fill="#f8c21c"/><path d="M3 2V14L8 15V2z" fill="#ffe06a"/><ellipse cx="9" cy="2" rx="6" ry="2" fill="#f09a3e"/><path d="M18 1H23V6M1 18V23H6" fill="none" stroke="#4ba33e" stroke-width="2"/><path d="M11 12 22 23M22 12 11 23M9 14 13 10M20 11 23 14" stroke="#ea6a13" stroke-width="2"/></svg></div>
  <div class="tk run d-flex align-items-center justify-content-center position-relative"><svg width="24" height="24"><path d="M0 6 3 5 18 20 17 24 0 16z" fill="#7b4cb8"/><path d="M0 18 3 19 18 5 17 0 0 8z" fill="#5c3799"/><path d="M17 0 24 3V21L17 24z" fill="#b98af0"/><path d="M3 9V15L6 12z" fill="#29231b"/><path d="M17 7V17L11 12z" fill="#29231b"/></svg></div>
  <div class="tk run d-flex align-items-center justify-content-center position-relative"><svg width="22" height="17"><rect x=".5" y=".5" width="21" height="16" fill="#5c2d91" stroke="#8a8a8a"/><path d="M1 2H21" stroke="#aaa"/><text x="2.500" y="8" font-family="Liberation Mono" font-size="5" fill="#fff" letter-spacing="0">C:\_</text></svg></div>
  <div class="tk run d-flex align-items-center justify-content-center position-relative"><svg width="24" height="24"><use href="#edge"/></svg></div>
  <div class="run active-app d-flex align-items-center justify-content-center position-relative"><svg width="24" height="24"><rect width="18" height="18" rx="2" fill="#f4f4f4"/><path d="M3 13V3H13" fill="none" stroke="#d83b01" stroke-width="2.500" stroke-dasharray="2.600 1"/><path d="M16 5V17H7M14 15 20 15M15 14V20" fill="none" stroke="#8a8f96" stroke-width="2"/><circle cx="21" cy="14" r="2.200" fill="none" stroke="#2196e3" stroke-width="1.500"/><circle cx="14" cy="21.500" r="2.200" fill="none" stroke="#2196e3" stroke-width="1.500"/></svg></div>
  <div class="clock ms-auto text-end" style="margin-right:23px;letter-spacing:.1px;color:#e3e4e6">5:57 PM<br>9/14/2023</div>
</footer>
<script src="https://cdn.jsdelivr.net/npm/bootstrap@5.3.0/dist/js/bootstrap.bundle.min.js"></script>
</body>
</html>
